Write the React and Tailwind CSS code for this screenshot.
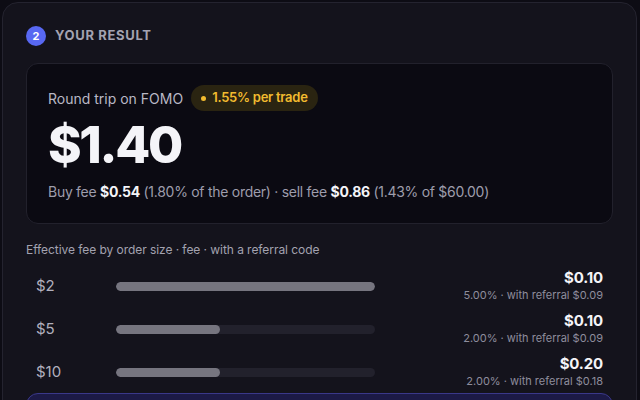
export default function App() {
  const rows = [
    { label: "$2", pct: 100, fee: "$0.10", sub: "5.00% · with referral $0.09" },
    { label: "$5", pct: 40, fee: "$0.10", sub: "2.00% · with referral $0.09" },
    { label: "$10", pct: 40, fee: "$0.20", sub: "2.00% · with referral $0.18" },
  ];
  return (
    <div
      className="w-[640px] h-[400px] overflow-hidden bg-[#0d0c14] pt-[2px] pl-[2px] pr-[3px]"
      style={{ fontFamily: "Inter, 'Noto Sans', sans-serif" }}
    >
      <div className="rounded-2xl border border-[#24232f] bg-[#14131c] pl-[23px] pr-[23px] pt-[23px] h-[420px]">
        <div className="flex items-center gap-[9px] h-5">
          <div className="w-5 h-5 rounded-full bg-[#5868f2] text-white text-[11px] font-bold flex items-center justify-center">
            2
          </div>
          <div className="text-[13px] font-bold tracking-[0.05em] text-[#a4a3b1]">YOUR RESULT</div>
        </div>

        <div className="mt-[17px] rounded-xl border border-[#22212c] bg-[#0b0a12] pl-[21px] pr-5 pt-[21px] pb-[21px]">
          <div className="flex items-center gap-2 h-[26px]">
            <span className="text-[14px] text-[#b9b8c5]">Round trip on FOMO</span>
            <span className="flex items-center gap-[6px] h-[26px] rounded-full bg-[#2a2411] px-[10px] text-[13px] font-semibold tracking-[-0.02em] text-[#f2bb2f]">
              <span className="w-[5px] h-[5px] rounded-full bg-[#f2bb2f]"></span>
              1.55% per trade
            </span>
          </div>
          <div className="mt-2 text-[51px] leading-[52px] font-extrabold tracking-[-0.045em] text-[#f4f4f8]">
            $1.40
          </div>
          <div className="mt-[11px] text-[14px] leading-5 tracking-[-0.02em] text-[#9e9dac]">
            Buy fee <span className="font-bold text-[#f4f4f8]">$0.54</span> (1.80% of the order) · sell fee{" "}
            <span className="font-bold text-[#f4f4f8]">$0.86</span> (1.43% of $60.00)
          </div>
        </div>

        <div className="mt-[17px] text-[12px] leading-[18px] tracking-[-0.005em] text-[#a3a2b0]">
          Effective fee by order size · fee · with a referral code
        </div>

        <div className="mt-[10px] flex flex-col gap-[9px]">
          {rows.map((r) => (
            <div key={r.label} className="flex items-center px-[10px]">
              <div className="w-[80px] text-[15px] text-[#b1b0be]">{r.label}</div>
              <div className="w-[259px] h-[9px] rounded-full bg-[#22212c] overflow-hidden">
                <div className="h-full rounded-full bg-[#76757f]" style={{ width: `${r.pct}%` }}></div>
              </div>
              <div className="flex-1 flex flex-col items-end">
                <div className="text-[15px] leading-[18px] font-bold tracking-[-0.01em] text-[#f4f4f8]">{r.fee}</div>
                <div className="text-[11px] leading-4 text-[#8e8d9c]">{r.sub}</div>
              </div>
            </div>
          ))}
        </div>

        <div className="mt-1 h-[40px] rounded-xl border border-[#3a388a] bg-[#1c1a46]"></div>
      </div>
    </div>
  );
}
